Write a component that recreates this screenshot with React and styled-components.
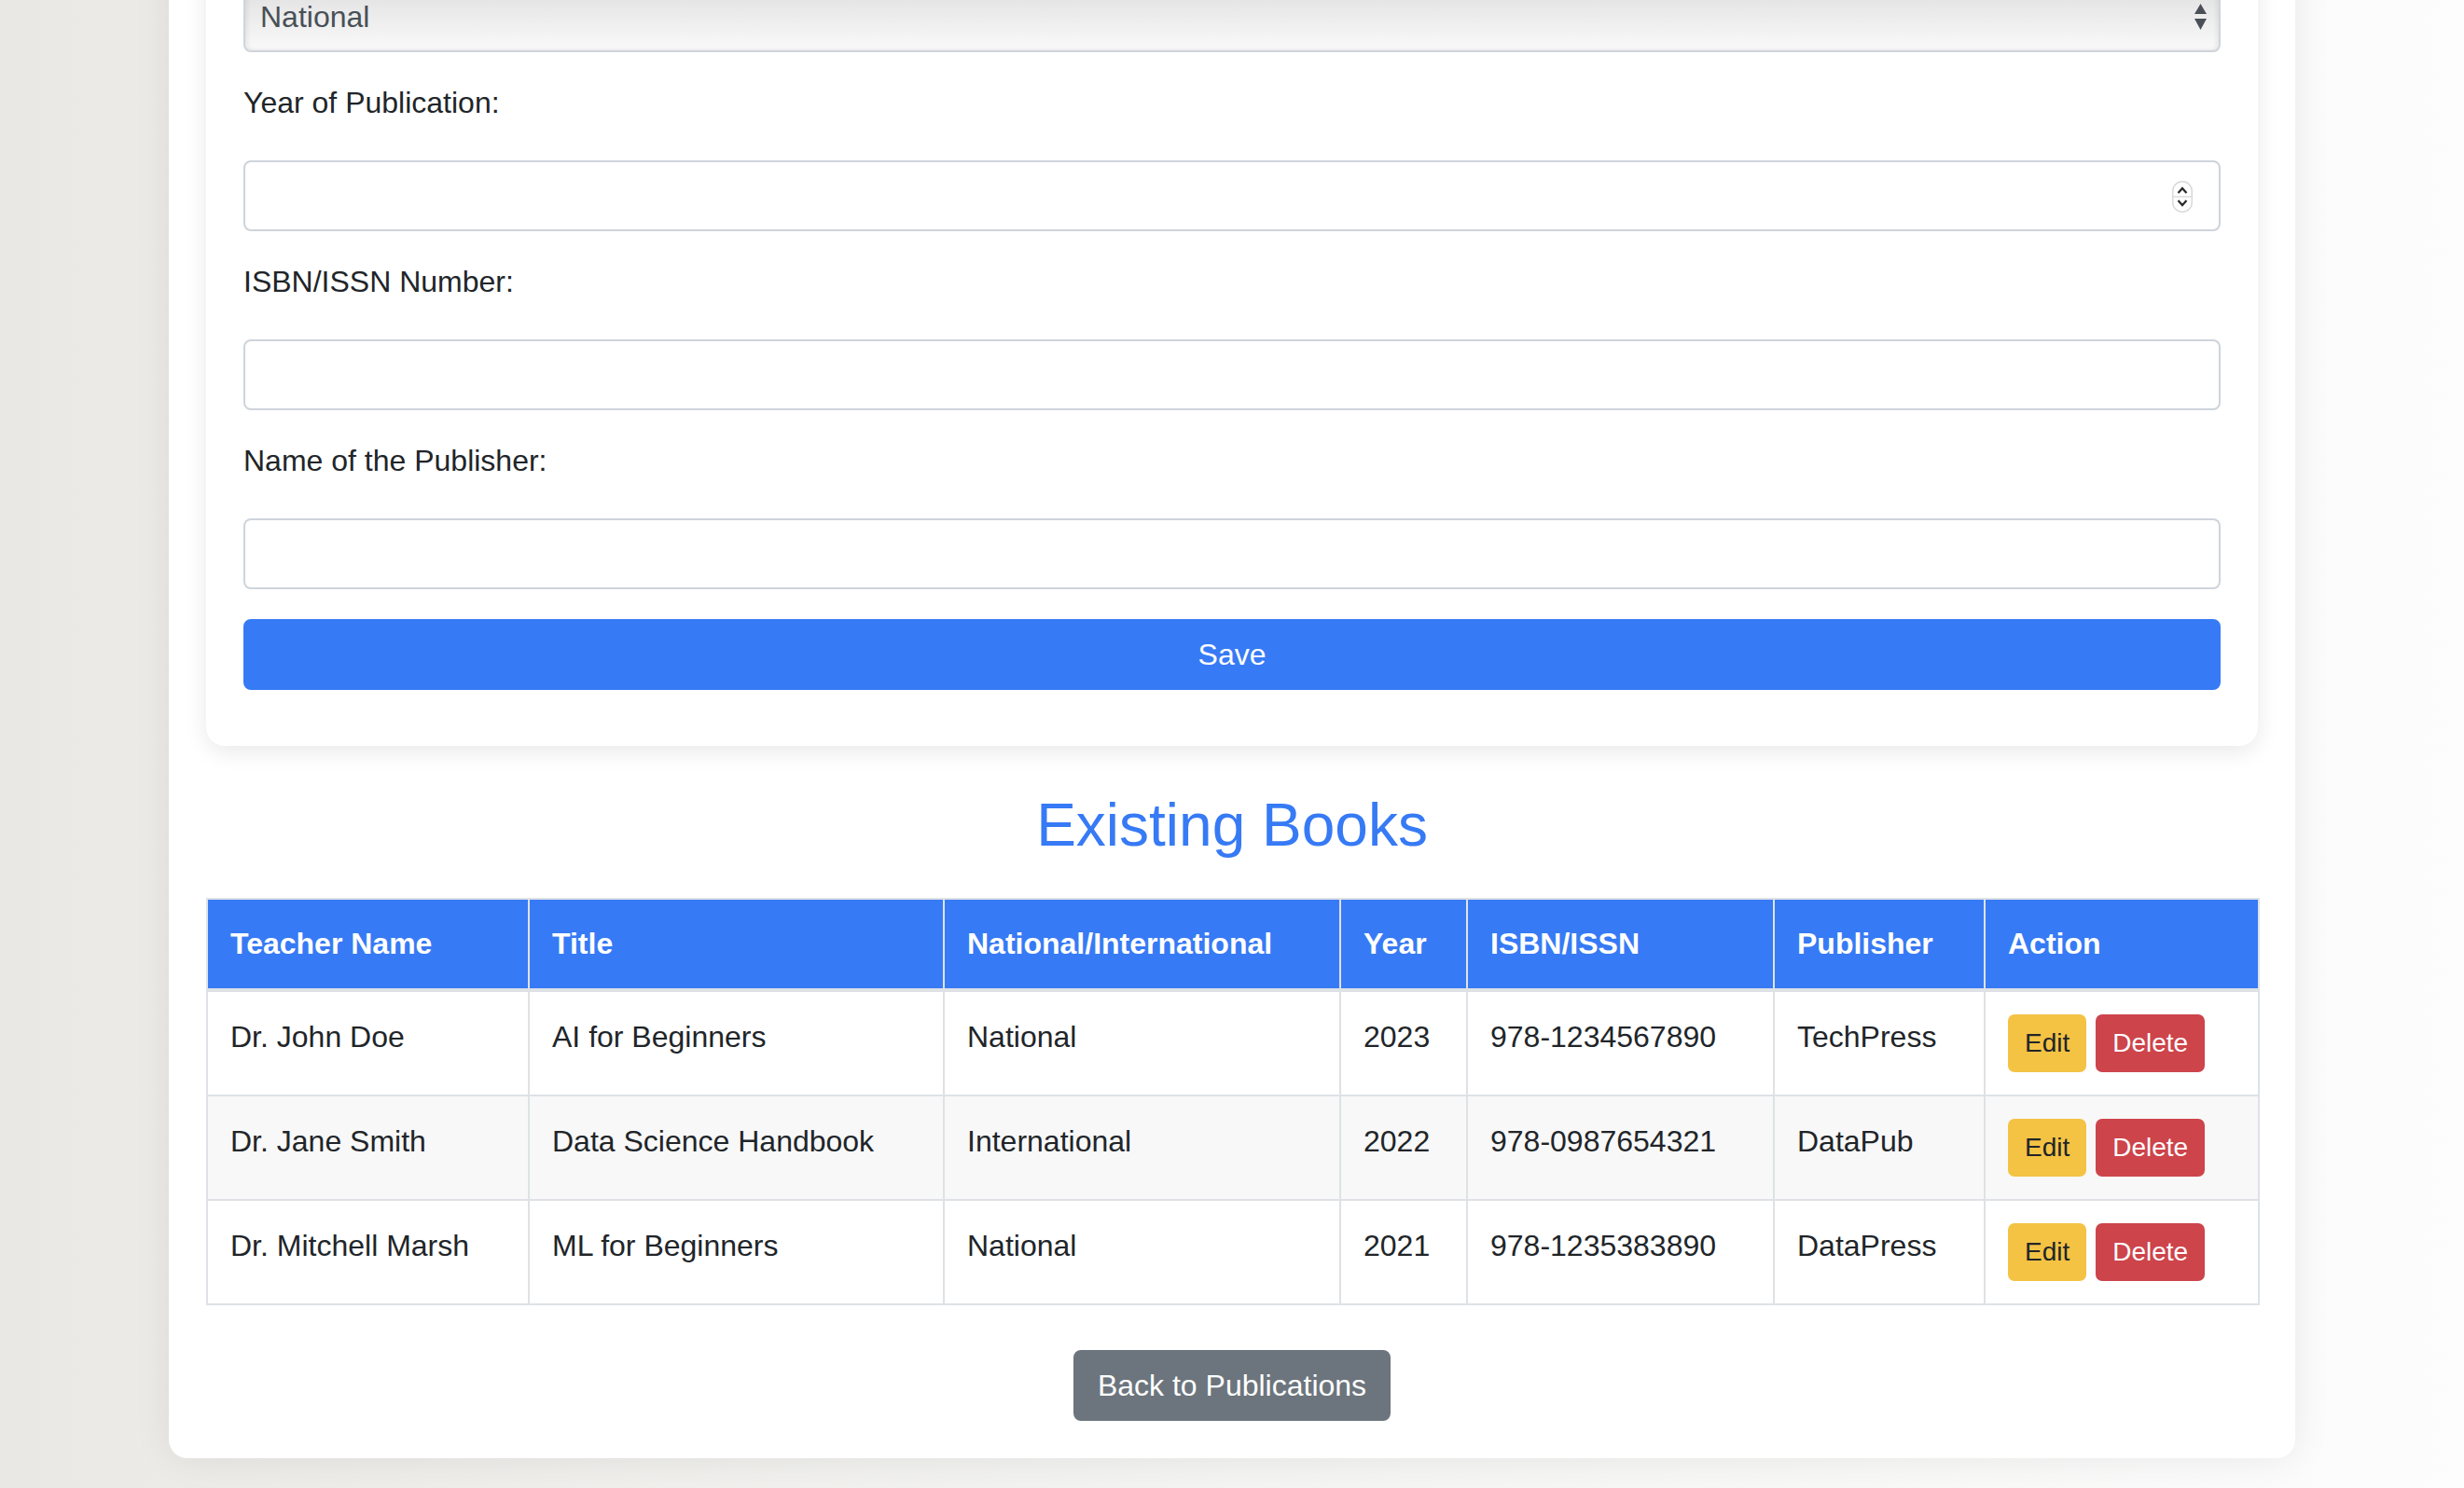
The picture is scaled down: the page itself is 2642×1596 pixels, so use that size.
import React from 'react';
import styled, { createGlobalStyle } from 'styled-components';

const GlobalStyle = createGlobalStyle`
  html, body { margin: 0; padding: 0; }
  * { box-sizing: border-box; }
  body {
    font-family: "Liberation Sans", Arial, Helvetica, sans-serif;
    color: #212529;
    background: linear-gradient(to right, #e9e8e5 0%, #ecebe8 7%, #f4f4f2 50%, #fbfbfb 92%, #fdfdfd 100%);
    min-height: 1596px;
    overflow: hidden;
  }
`;

const Page = styled.div`
  padding-bottom: 30px;
`;

const Container = styled.main`
  width: 2280px;
  margin: -100px auto 0;
  background: #fff;
  border-radius: 20px;
  padding: 40px;
  box-shadow: 0 0 40px rgba(0, 0, 0, 0.08);
`;

const FormCard = styled.section`
  background: #fff;
  border-radius: 20px;
  padding: 40px 40px 60px;
  box-shadow: 0 6px 24px rgba(0, 0, 0, 0.09);
`;

const Field = styled.div`
  margin-bottom: ${(p) => (p.$last ? 32 : 30)}px;
`;

const Label = styled.label`
  display: block;
  font-size: 32px;
  line-height: 48px;
  margin-bottom: 38px;
  color: #212529;
`;

const ControlWrap = styled.div`
  position: relative;
`;

const Input = styled.input`
  display: block;
  width: 100%;
  height: 76px;
  padding: 12px 24px;
  font-family: inherit;
  font-size: 32px;
  color: #495057;
  background: #fff;
  border: 2px solid #ced4da;
  border-radius: 8px;
  outline: none;
`;

const Select = styled.select`
  display: block;
  width: 100%;
  height: 76px;
  padding: 0 60px 0 16px;
  font-family: inherit;
  font-size: 32px;
  color: #495057;
  border: 2px solid #ced4da;
  border-radius: 8px;
  appearance: none;
  -webkit-appearance: none;
  background: linear-gradient(to bottom, #dedede 0%, #e8e8e8 35%, #f3f3f3 75%, #f9f9f9 100%);
  box-shadow: inset 3px 0 4px rgba(0, 0, 0, 0.06), inset -3px 0 4px rgba(0, 0, 0, 0.06);
  outline: none;
`;

const SelectArrows = styled.svg`
  position: absolute;
  right: 15px;
  top: 24px;
  pointer-events: none;
`;

const Spinner = styled.svg`
  position: absolute;
  right: 30px;
  top: 22px;
  pointer-events: none;
`;

const PrimaryButton = styled.button`
  display: block;
  width: 100%;
  height: 76px;
  font-family: inherit;
  font-size: 32px;
  line-height: 48px;
  color: #fff;
  background: #377af5;
  border: 2px solid #377af5;
  border-radius: 8px;
  cursor: pointer;
`;

const Heading = styled.h2`
  margin: 47px 0 40px;
  font-size: 64px;
  line-height: 76px;
  font-weight: 400;
  color: #377af5;
  text-align: center;
`;

const Table = styled.table`
  width: 100%;
  border-collapse: collapse;
  table-layout: fixed;
  font-size: 32px;
  line-height: 48px;
  color: #212529;
`;

const Col = styled.col`
  width: ${(p) => p.$w}px;
`;

const Th = styled.th`
  text-align: left;
  padding: 23px 24px 24px;
  font-weight: 700;
  color: #fff;
  background: #377af5;
  border: 2px solid #dee2e6;
  border-bottom-width: 4px;
  white-space: nowrap;
`;

const Tr = styled.tr`
  background: ${(p) => (p.$alt ? '#f8f8f8' : '#fff')};
`;

const Td = styled.td`
  padding: 24px;
  vertical-align: top;
  border: 2px solid #dee2e6;
  white-space: nowrap;
`;

const Actions = styled.div`
  display: flex;
  gap: 10px;
`;

const SmallButton = styled.button`
  font-family: inherit;
  font-size: 28px;
  line-height: 42px;
  padding: 8px 16px;
  border: 2px solid ${(p) => (p.$danger ? '#cd444b' : '#f4c344')};
  border-radius: 7px;
  background: ${(p) => (p.$danger ? '#cd444b' : '#f4c344')};
  color: ${(p) => (p.$danger ? '#fff' : '#212529')};
  cursor: pointer;
`;

const Footer = styled.div`
  display: flex;
  justify-content: center;
  margin-top: 48px;
`;

const SecondaryButton = styled.button`
  font-family: inherit;
  font-size: 32px;
  line-height: 48px;
  padding: 12px 24px;
  color: #fff;
  background: #6c757d;
  border: 2px solid #6c757d;
  border-radius: 8px;
  cursor: pointer;
`;

const books = [
  { teacher: 'Dr. John Doe', title: 'AI for Beginners', scope: 'National', year: '2023', isbn: '978-1234567890', publisher: 'TechPress' },
  { teacher: 'Dr. Jane Smith', title: 'Data Science Handbook', scope: 'International', year: '2022', isbn: '978-0987654321', publisher: 'DataPub' },
  { teacher: 'Dr. Mitchell Marsh', title: 'ML for Beginners', scope: 'National', year: '2021', isbn: '978-1235383890', publisher: 'DataPress' },
];

const columns = [
  { label: 'Teacher Name', w: 345 },
  { label: 'Title', w: 445 },
  { label: 'National/International', w: 425 },
  { label: 'Year', w: 136 },
  { label: 'ISBN/ISSN', w: 329 },
  { label: 'Publisher', w: 226 },
  { label: 'Action', w: 294 },
];

export default function App() {
  return (
    <>
      <GlobalStyle />
      <Page>
        <Container>
          <FormCard>
            <Field>
              <ControlWrap>
                <Select defaultValue="National">
                  <option>National</option>
                  <option>International</option>
                </Select>
                <SelectArrows width="13" height="28" viewBox="0 0 13 28">
                  <polygon points="0,11 6.5,0 13,11" fill="#4b5057" />
                  <polygon points="0,16 13,16 6.5,28" fill="#4b5057" />
                </SelectArrows>
              </ControlWrap>
            </Field>
            <Field>
              <Label>Year of Publication:</Label>
              <ControlWrap>
                <Input type="text" />
                <Spinner width="22" height="34" viewBox="0 0 22 34">
                  <rect x="0.75" y="0.75" width="20.5" height="32.5" rx="10" fill="#fff" stroke="#d9d9d9" strokeWidth="1.5" />
                  <line x1="1" y1="17" x2="21" y2="17" stroke="#dcdcdc" strokeWidth="1.5" />
                  <path d="M6.5 13 L11 8 L15.5 13" fill="none" stroke="#2a2a2a" strokeWidth="2.2" />
                  <path d="M6.5 21 L11 26 L15.5 21" fill="none" stroke="#2a2a2a" strokeWidth="2.2" />
                </Spinner>
              </ControlWrap>
            </Field>
            <Field>
              <Label>ISBN/ISSN Number:</Label>
              <Input type="text" />
            </Field>
            <Field $last>
              <Label>Name of the Publisher:</Label>
              <Input type="text" />
            </Field>
            <PrimaryButton type="button">Save</PrimaryButton>
          </FormCard>

          <Heading>Existing Books</Heading>

          <Table>
            <colgroup>
              {columns.map((c) => (
                <Col key={c.label} $w={c.w} />
              ))}
            </colgroup>
            <thead>
              <tr>
                {columns.map((c) => (
                  <Th key={c.label}>{c.label}</Th>
                ))}
              </tr>
            </thead>
            <tbody>
              {books.map((b, i) => (
                <Tr key={b.isbn} $alt={i % 2 === 1}>
                  <Td>{b.teacher}</Td>
                  <Td>{b.title}</Td>
                  <Td>{b.scope}</Td>
                  <Td>{b.year}</Td>
                  <Td>{b.isbn}</Td>
                  <Td>{b.publisher}</Td>
                  <Td>
                    <Actions>
                      <SmallButton type="button">Edit</SmallButton>
                      <SmallButton type="button" $danger>Delete</SmallButton>
                    </Actions>
                  </Td>
                </Tr>
              ))}
            </tbody>
          </Table>

          <Footer>
            <SecondaryButton type="button">Back to Publications</SecondaryButton>
          </Footer>
        </Container>
      </Page>
    </>
  );
}
